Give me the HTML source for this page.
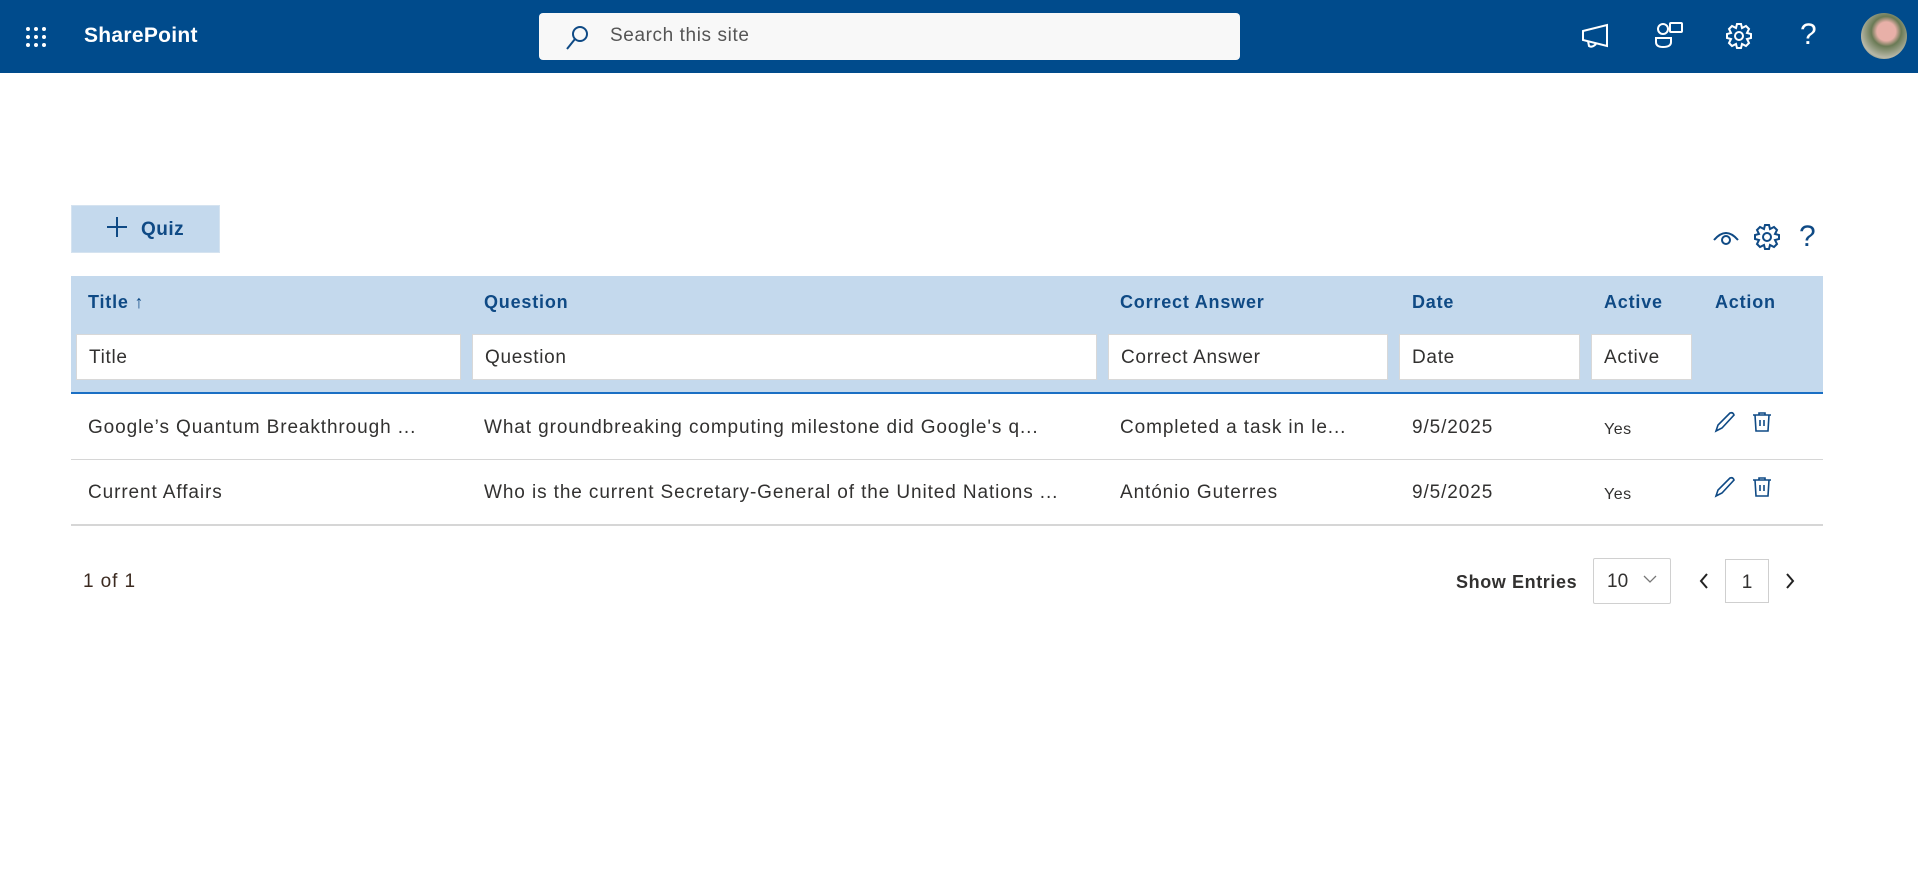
<!DOCTYPE html>
<html><head><meta charset="utf-8"><style>
*{box-sizing:border-box;margin:0;padding:0}
body{width:1918px;height:873px;background:#fff;font-family:"Liberation Sans",sans-serif;position:relative;overflow:hidden;color:#323130}
.a{position:absolute}
.hdr{left:0;top:0;width:1918px;height:73px;background:#004b8c}
.lbl{color:#0f4a85;font-weight:bold;font-size:18px;letter-spacing:0.8px}
.inp{background:#fff;border:1px solid #d8d8d8;height:46px;top:334px;font-size:19px;letter-spacing:0.7px;padding:12px 0 0 12px;color:#323130}
.cell{font-size:19px;letter-spacing:0.9px;color:#323130}
</style></head><body>
<div class="a hdr"></div>
<svg class="a" style="left:25px;top:26px" width="22" height="22" fill="#fff"><circle cx="3" cy="3" r="2"/><circle cx="11" cy="3" r="2"/><circle cx="19" cy="3" r="2"/><circle cx="3" cy="11" r="2"/><circle cx="11" cy="11" r="2"/><circle cx="19" cy="11" r="2"/><circle cx="3" cy="19" r="2"/><circle cx="11" cy="19" r="2"/><circle cx="19" cy="19" r="2"/></svg>
<div class="a" style="left:84px;top:24px;color:#fff;font-weight:bold;font-size:21px;letter-spacing:0.3px">SharePoint</div>
<div class="a" style="left:539px;top:13px;width:701px;height:47px;background:#f8f8f8;border-radius:4px"></div>
<svg class="a" style="left:564px;top:24px" width="26" height="28" fill="none" stroke="#0f4a85" stroke-width="2"><circle cx="16" cy="10" r="7"/><path d="M11 15L3 25"/></svg>
<div class="a" style="left:610px;top:25px;font-size:19px;letter-spacing:0.6px;color:#555">Search this site</div>
<svg class="a" style="left:1580px;top:22px" width="30" height="28" fill="none" stroke="#fff" stroke-width="2"><path d="M3 9L27 3V24L3 18Z"/><path d="M8 19L9 24Q12 26 16 22"/></svg>
<svg class="a" style="left:1654px;top:20px" width="30" height="30" fill="none" stroke="#fff" stroke-width="2"><circle cx="9" cy="9" r="5"/><path d="M2 18H17V22Q17 27 9 27Q2 27 2 22Z"/><rect x="16" y="3" width="12" height="9" rx="1"/></svg>
<svg class="a" style="left:1725px;top:22px" width="28" height="28" fill="none" stroke="#fff" stroke-width="2"><circle cx="14" cy="14" r="4"/><path d="M12 2H16L17 6L21 4L24 7L22 11L26 12V16L22 17L24 21L21 24L17 22L16 26H12L11 22L7 24L4 21L6 17L2 16V12L6 11L4 7L7 4L11 6Z"/></svg>
<div class="a" style="left:1800px;top:18px;color:#fff;font-size:30px">?</div>
<div class="a" style="left:1861px;top:13px;width:46px;height:46px;border-radius:50%;background:radial-gradient(circle at 55% 40%,#e8b0a8 0 25%,#6a7a55 40%,#b8b8a8 70%,#3a5a3a)"></div>

<div class="a" style="left:71px;top:205px;width:149px;height:48px;background:#c4d9ed;border:1px solid #d5e3f0"></div>
<svg class="a" style="left:106px;top:216px" width="22" height="22" stroke="#0f4a85" stroke-width="2"><path d="M11 1V21M1 11H21"/></svg>
<div class="a" style="left:141px;top:219px;color:#0f4a85;font-weight:bold;font-size:19px;letter-spacing:0.5px">Quiz</div>

<svg class="a" style="left:1712px;top:228px" width="28" height="18" fill="none" stroke="#0f4a85" stroke-width="2"><path d="M2 12Q14 -2 26 12"/><circle cx="14" cy="12" r="4"/></svg>
<svg class="a" style="left:1753px;top:223px" width="28" height="28" fill="none" stroke="#0f4a85" stroke-width="2"><circle cx="14" cy="14" r="4"/><path d="M12 2H16L17 6L21 4L24 7L22 11L26 12V16L22 17L24 21L21 24L17 22L16 26H12L11 22L7 24L4 21L6 17L2 16V12L6 11L4 7L7 4L11 6Z"/></svg>
<div class="a" style="left:1799px;top:220px;color:#0f4a85;font-size:30px">?</div>

<div class="a" style="left:71px;top:276px;width:1752px;height:118px;background:#c4d9ed;border-bottom:2px solid #1a6fc4"></div>
<div class="a lbl" style="left:88px;top:292px">Title <span style="font-weight:normal">↑</span></div>
<div class="a lbl" style="left:484px;top:292px">Question</div>
<div class="a lbl" style="left:1120px;top:292px">Correct Answer</div>
<div class="a lbl" style="left:1412px;top:292px">Date</div>
<div class="a lbl" style="left:1604px;top:292px">Active</div>
<div class="a lbl" style="left:1715px;top:292px">Action</div>
<div class="a inp" style="left:76px;width:385px">Title</div>
<div class="a inp" style="left:472px;width:625px">Question</div>
<div class="a inp" style="left:1108px;width:280px">Correct Answer</div>
<div class="a inp" style="left:1399px;width:181px">Date</div>
<div class="a inp" style="left:1591px;width:101px">Active</div>

<div class="a cell" style="left:88px;top:417px">Google’s Quantum Breakthrough ...</div>
<div class="a cell" style="left:484px;top:417px">What groundbreaking computing milestone did Google's q...</div>
<div class="a cell" style="left:1120px;top:417px">Completed a task in le...</div>
<div class="a cell" style="left:1412px;top:417px">9/5/2025</div>
<div class="a" style="left:1604px;top:421px;font-size:16px;letter-spacing:0.5px">Yes</div>
<div class="a" style="left:71px;top:459px;width:1752px;height:1px;background:#d6d6d6"></div>
<div class="a cell" style="left:88px;top:482px">Current Affairs</div>
<div class="a cell" style="left:484px;top:482px">Who is the current Secretary-General of the United Nations ...</div>
<div class="a cell" style="left:1120px;top:482px">António Guterres</div>
<div class="a cell" style="left:1412px;top:482px">9/5/2025</div>
<div class="a" style="left:1604px;top:486px;font-size:16px;letter-spacing:0.5px">Yes</div>
<div class="a" style="left:71px;top:524px;width:1752px;height:2px;background:#d6d6d6"></div>

<svg class="a" style="left:1714px;top:411px" width="22" height="22" fill="none" stroke="#0f4a85" stroke-width="1.6"><path d="M2 20L4 14L16 2Q19 1 20 4L8 17Z"/></svg>
<svg class="a" style="left:1751px;top:411px" width="22" height="22" fill="none" stroke="#0f4a85" stroke-width="1.6"><path d="M2 4H20M8 4V2H14V4M4 4L5 20H17L18 4M9 9V15M13 9V15"/></svg>
<svg class="a" style="left:1714px;top:476px" width="22" height="22" fill="none" stroke="#0f4a85" stroke-width="1.6"><path d="M2 20L4 14L16 2Q19 1 20 4L8 17Z"/></svg>
<svg class="a" style="left:1751px;top:476px" width="22" height="22" fill="none" stroke="#0f4a85" stroke-width="1.6"><path d="M2 4H20M8 4V2H14V4M4 4L5 20H17L18 4M9 9V15M13 9V15"/></svg>

<div class="a cell" style="left:83px;top:571px;color:#3b2a20">1 of 1</div>
<div class="a" style="left:1456px;top:572px;font-size:18px;letter-spacing:0.6px;font-weight:bold;color:#323130">Show Entries</div>
<div class="a" style="left:1593px;top:558px;width:78px;height:46px;border:1px solid #d0d0d0;border-radius:2px;font-size:19px;padding:12px 0 0 13px">10</div>
<svg class="a" style="left:1643px;top:574px" width="14" height="10" fill="none" stroke="#777" stroke-width="1.3"><path d="M1 2L7 8L13 2"/></svg>
<svg class="a" style="left:1698px;top:572px" width="12" height="18" fill="none" stroke="#222" stroke-width="2"><path d="M9 2L3 9L9 16"/></svg>
<div class="a" style="left:1725px;top:559px;width:44px;height:44px;border:1px solid #cfcfcf;font-size:19px;text-align:center;padding-top:12px">1</div>
<svg class="a" style="left:1784px;top:572px" width="12" height="18" fill="none" stroke="#222" stroke-width="2"><path d="M3 2L9 9L3 16"/></svg>
</body></html>
